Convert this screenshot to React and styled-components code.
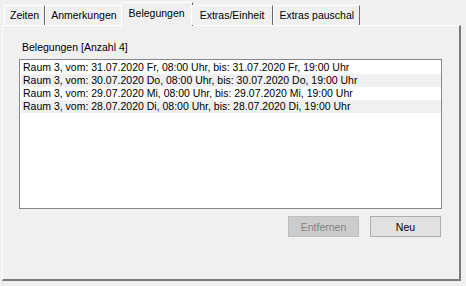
import React from "react";
import styled, { createGlobalStyle } from "styled-components";

const Global = createGlobalStyle`
  html, body { margin: 0; padding: 0; background: #f0f0f0; }
  body { width: 466px; height: 286px; overflow: hidden; font-family: "Liberation Sans", Arial, sans-serif; font-size: 10.5px; color: #000; }
`;

const Window = styled.div`
  width: 466px;
  height: 286px;
  box-sizing: border-box;
  padding: 2px 5px 5px 2px;
  display: flex;
  flex-direction: column;
`;

const TabStrip = styled.div`
  display: flex;
  align-items: flex-end;
  height: 23px;
  padding-left: 2px;
  position: relative;
  z-index: 1;
`;

const Tab = styled.div`
  box-sizing: border-box;
  height: ${(p) => (p.$active ? 24 : 20)}px;
  margin-bottom: ${(p) => (p.$active ? -1 : 0)}px;
  margin-left: ${(p) => (p.$active ? -2 : 0)}px;
  margin-right: ${(p) => (p.$active ? -2 : 0)}px;
  padding: ${(p) => (p.$active ? "3px 7px 0 7px" : `2px ${5 + p.$extra}px 0 ${5 + p.$extra}px`)};
  background: #f0f0f0;
  border-left: 1px solid #fff;
  border-top: 1px solid #fff;
  border-right: 1px solid #696969;
  white-space: nowrap;
  line-height: 14px;
`;

const Panel = styled.div`
  flex: 1;
  box-sizing: border-box;
  border-left: 1px solid #fff;
  border-top: 1px solid #fff;
  border-right: 2px solid #7a7a7a;
  border-bottom: 2px solid #7a7a7a;
  padding: 14px 17px 0 16px;
  display: flex;
  flex-direction: column;
`;

const GroupLabel = styled.div`
  padding-left: 3px;
  line-height: 14px;
  margin-bottom: 5px;
`;

const ListBox = styled.div`
  box-sizing: border-box;
  height: 150px;
  background: #fff;
  border: 1px solid #828790;
  padding: 1px 0 0 1px;
`;

const Row = styled.div`
  height: 13px;
  line-height: 13px;
  padding-left: 2px;
  background: ${(p) => (p.$alt ? "#f0f0f0" : "#fff")};
  white-space: nowrap;
`;

const ButtonBar = styled.div`
  display: flex;
  justify-content: flex-end;
  gap: 11px;
  margin-top: 7px;
  padding-right: 1px;
`;

const Button = styled.button`
  box-sizing: border-box;
  width: 71px;
  height: 21px;
  font-family: inherit;
  font-size: 10.5px;
  background: ${(p) => (p.disabled ? "#cccccc" : "#e1e1e1")};
  color: ${(p) => (p.disabled ? "#838383" : "#000")};
  border: 1px solid ${(p) => (p.disabled ? "#bfbfbf" : "#adadad")};
  padding: 0;
`;

const tabs = [
  { label: "Zeiten", extra: 0 },
  { label: "Anmerkungen", extra: 0 },
  { label: "Belegungen", extra: 0 },
  { label: "Extras/Einheit", extra: 3 },
  { label: "Extras pauschal", extra: 0 },
];
const rows = [
  "Raum 3, vom: 31.07.2020 Fr, 08:00 Uhr, bis: 31.07.2020 Fr, 19:00 Uhr",
  "Raum 3, vom: 30.07.2020 Do, 08:00 Uhr, bis: 30.07.2020 Do, 19:00 Uhr",
  "Raum 3, vom: 29.07.2020 Mi, 08:00 Uhr, bis: 29.07.2020 Mi, 19:00 Uhr",
  "Raum 3, vom: 28.07.2020 Di, 08:00 Uhr, bis: 28.07.2020 Di, 19:00 Uhr",
];

export default function App() {
  return (
    <>
      <Global />
      <Window>
        <TabStrip>
          {tabs.map((t) => (
            <Tab key={t.label} $active={t.label === "Belegungen"} $extra={t.extra}>
              {t.label}
            </Tab>
          ))}
        </TabStrip>
        <Panel>
          <GroupLabel>Belegungen [Anzahl 4]</GroupLabel>
          <ListBox>
            {rows.map((r, i) => (
              <Row key={i} $alt={i % 2 === 1}>{r}</Row>
            ))}
          </ListBox>
          <ButtonBar>
            <Button disabled>Entfernen</Button>
            <Button>Neu</Button>
          </ButtonBar>
        </Panel>
      </Window>
    </>
  );
}
